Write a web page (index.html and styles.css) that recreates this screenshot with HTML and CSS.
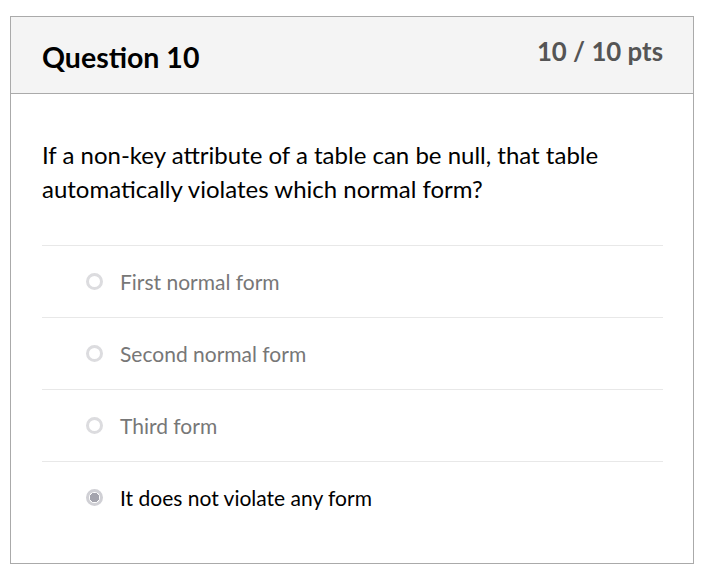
FILE: index.html
```html
<!DOCTYPE html>
<html>
<head>
<meta charset="utf-8">
<link rel="stylesheet" href="styles.css">
</head>
<body>
<div class="card">
  <div class="header">
    <div class="title">Question 10</div>
    <div class="pts">10 / 10 pts</div>
  </div>
  <div class="body">
    <div class="question">If a non-key attribute of a table can be null, that table automatically violates which normal form?</div>
    <div class="answers">
      <div class="answer"><span class="radio"></span><span class="label">First normal form</span></div>
      <div class="answer"><span class="radio"></span><span class="label">Second normal form</span></div>
      <div class="answer"><span class="radio"></span><span class="label">Third form</span></div>
      <div class="answer selected"><span class="radio"></span><span class="label">It does not violate any form</span></div>
    </div>
  </div>
</div>
</body>
</html>
```

FILE: styles.css
```css
html, body { margin: 0; padding: 0; background: #fff; }
body { padding: 16px 0 0 10px; font-family: Lato, "Open Sans", sans-serif; }
.card {
  width: 682px;
  height: 546px;
  border: 1px solid #aaa;
  box-sizing: content-box;
}
.header {
  height: 76px;
  background: #f4f4f4;
  border-bottom: 1px solid #aaa;
  display: flex;
  justify-content: space-between;
  align-items: flex-start;
  padding: 0 30px 0 31px;
}
.title {
  font-weight: 700;
  font-size: 28.5px;
  color: #000;
  margin-top: 24px;
  line-height: 32px;
}
.pts {
  font-weight: 700;
  font-size: 25.8px;
  color: #555;
  margin-top: 19px;
  line-height: 30px;
}
.body { padding: 44px 30px 0 31px; }
.question {
  font-size: 24px;
  line-height: 34px;
  color: #000;
  margin-bottom: 39px;
}
.answer {
  border-top: 1px solid #e8e8e8;
  height: 71px;
  display: flex;
  align-items: center;
  padding-left: 44px;
  color: #777;
  font-size: 21px;
}
.answer.selected { color: #000; }
.radio {
  flex: 0 0 auto;
  box-sizing: border-box;
  width: 17px;
  height: 17px;
  border: 3px solid #dcdcdf;
  border-radius: 50%;
  margin-right: 17px;
  background: #fff;
}
.answer.selected .radio {
  border-color: #d0d0d5;
  background: radial-gradient(circle, #a4a4ad 0 4.5px, #fff 5px);
}
```
